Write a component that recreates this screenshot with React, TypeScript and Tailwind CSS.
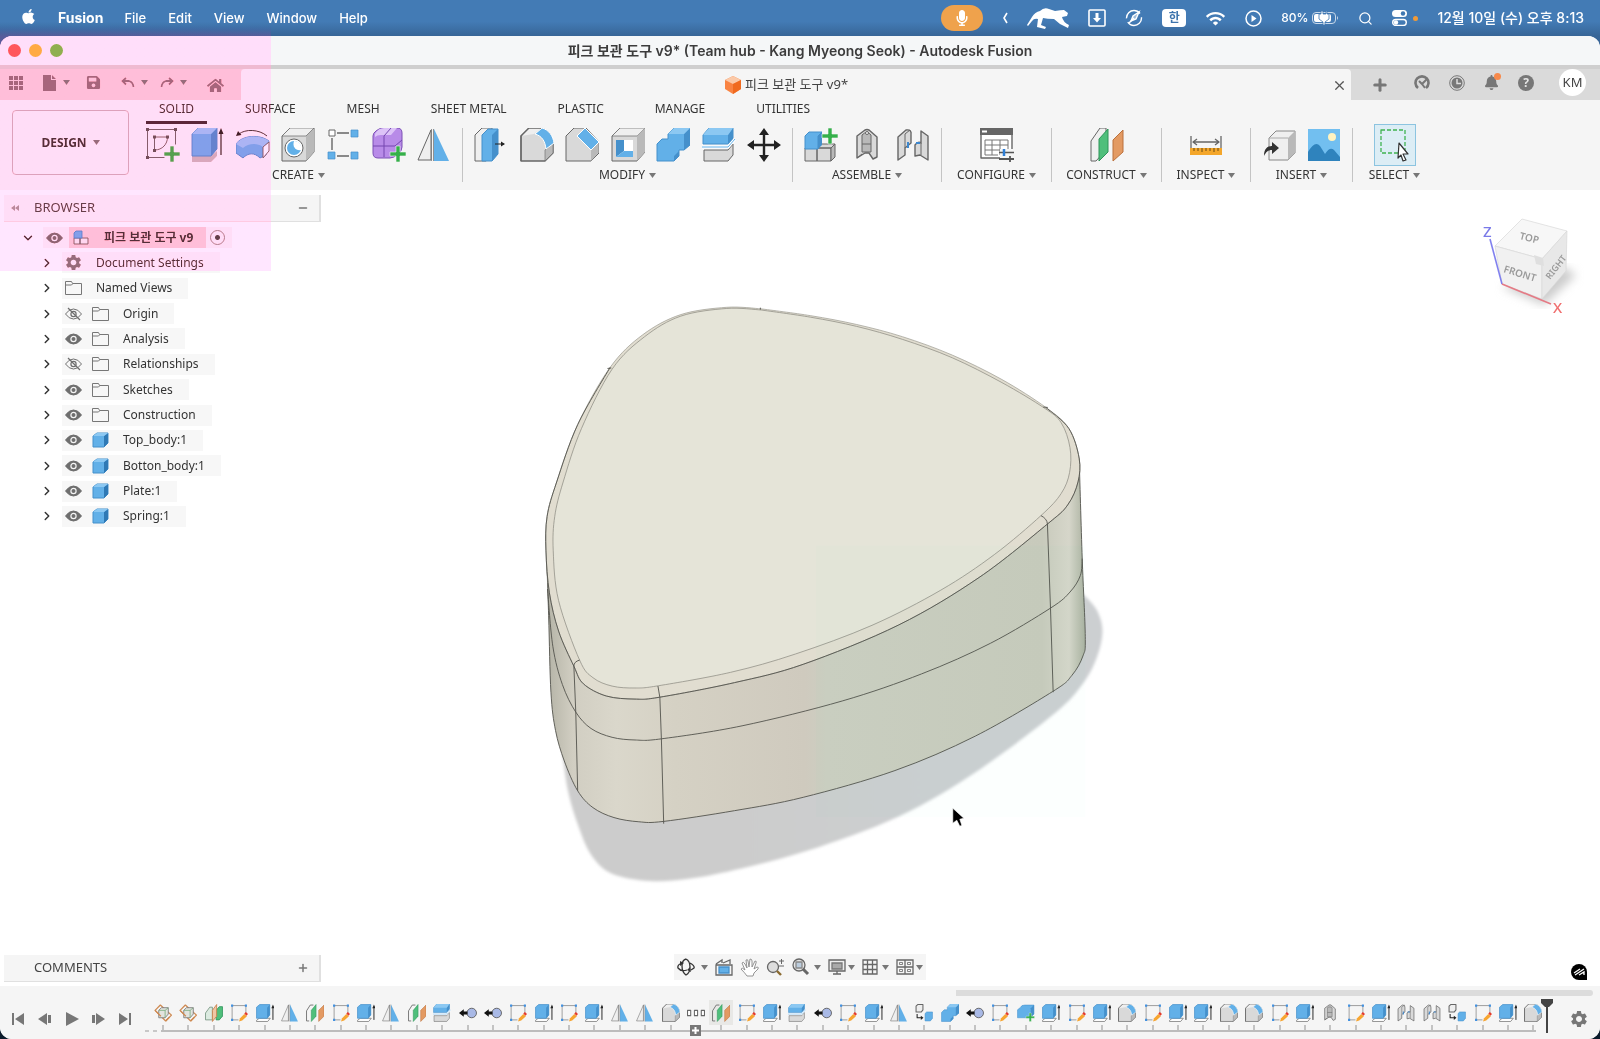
import type { ReactNode } from "react";
import clsx from "clsx";
import {
    ChevronDown,
    ChevronRight,
    Minus,
    Plus,
    Search,
    X,
} from "lucide-react";
import { FaApple, FaHome, FaMicrophone, FaSave, FaBell } from "react-icons/fa";
import { MdSettings, MdWifi } from "react-icons/md";

type Point = [number, number];

const BLUE = "#62b0e8";
const BLUE_DARK = "#4590cb";
const BLUE_LIGHT = "#8cc8f2";
const GREY = "#d9d9d9";
const GREY_LIGHT = "#efefef";
const GREY_DARK = "#b9b9b9";
const LINE = "#666666";

// Smooth line through a list of points
function curve(points: Point[]) {
    let d = `M${points[0][0]} ${points[0][1]}`;
    for (let i = 0; i < points.length - 1; i++) {
        const p0 = points[i - 1] ?? points[i];
        const p1 = points[i];
        const p2 = points[i + 1];
        const p3 = points[i + 2] ?? p2;
        const c1 = [p1[0] + (p2[0] - p0[0]) / 6, p1[1] + (p2[1] - p0[1]) / 6];
        const c2 = [p2[0] - (p3[0] - p1[0]) / 6, p2[1] - (p3[1] - p1[1]) / 6];
        d += `C${c1[0]} ${c1[1]} ${c2[0]} ${c2[1]} ${p2[0]} ${p2[1]}`;
    }
    return d;
}

function Icon({ children, size = 34 }: { children: ReactNode; size?: number }) {
    return (
        <svg width={size} height={size} viewBox="0 0 34 34" fill="none" strokeLinejoin="round" className="shrink-0">
            {children}
        </svg>
    );
}

const GreenPlus = ({ x = 26, y = 26 }: { x?: number; y?: number }) => (
    <path
        d={`M${x - 2} ${y - 8}h4v6h6v4h-6v6h-4v-6h-6v-4h6z`}
        fill="#35b04a"
        stroke="#f5f5f5"
        strokeWidth=".6"
    />
);

/* Tool icons, 34 x 34 grid */
const icons: Record<string, ReactNode> = {
    createSketch: (
        <>
            <path d="M1.5 1.5h28M1.5 1.5v28h17M29.500 1.500v15M8.500 9h13M8.500 9v13M21.500 9c0 7-5 13-13 13" stroke={LINE} />
            <path d="M0 0h3v3H0zM28 0h3v3h-3zM0 28h3v3H0zM7 7.500h3v3H7zM20 7.500h3v3h-3zM7 21h3v3H7z" fill="#555" />
            <GreenPlus />
        </>
    ),
    extrudeBig: (
        <>
            <path d="M1 28h19l6-5v5l-6 6H1z" fill={GREY_DARK} />
            <path d="M1 6l6-6h19v21l-6 7H1z" fill={BLUE} stroke={BLUE_DARK} />
            <path d="M20 6l6-6v21l-6 7z" fill={BLUE_DARK} />
            <path d="M1 6l6-6h19l-6 6z" fill={BLUE_LIGHT} />
            <path d="M30 27V4" stroke="#222" strokeWidth="1.200" />
            <path d="M30 0l2.500 6h-5z" fill="#222" />
        </>
    ),
    revolve: (
        <>
            <path d="M0 16C6 7 24 6 33 13l-3 14-6 3C18 24 12 25 7 30L0 25z" fill={BLUE} stroke={BLUE_DARK} />
            <path d="M0 16C6 7 24 6 33 13l-6 6C20 14 12 16 7 20z" fill={BLUE_LIGHT} />
            <path d="M27 19l6-5v9l-6 7z" fill="#fff" stroke={LINE} />
            <path d="M3 6C9 1 23 1 31 8" stroke="#333" />
            <path d="M0 8l2-5 3.500 4z" fill="#222" />
        </>
    ),
    hole: (
        <>
            <path d="M1 8l8-8h24v24l-8 9H1z" fill={GREY} stroke={LINE} />
            <path d="M25 8l8-8v24l-8 9z" fill={GREY_DARK} />
            <path d="M1 8l8-8h24l-8 8z" fill={GREY_LIGHT} stroke={LINE} strokeWidth=".7" />
            <circle cx="13" cy="20" r="9" fill="#fff" stroke={LINE} />
            <circle cx="13" cy="20" r="7" fill={BLUE} />
            <path d="M13 13a7 7 0 0 1 7 9c-5 1-9-3-7-9z" fill="#fff" />
        </>
    ),
    pattern: (
        <>
            <path d="M10 5h12M5 10v12M10 28h12" stroke={LINE} strokeWidth="1.400" />
            <rect x="2" y="2" width="6" height="6" fill="#fff" stroke={LINE} />
            <path d="M24 2h7v7h-7zM1 24h7v7H1zM24 24h7v7h-7z" fill={BLUE} stroke={BLUE_DARK} strokeWidth=".7" />
        </>
    ),
    form: (
        <>
            <path d="M1 8q0-3 3-5 3-3 8-3h13q5 0 5 5v14q0 4-4 7-4 4-8 4H6q-5 0-5-5z" fill="#b88be8" stroke="#7c50b5" />
            <path d="M3 6q3-6 9-6h13l-6 7H9q-4 0-6 2z" fill="#dcc3f7" />
            <path d="M1 18h22l7-6M12 29V8l7-8" stroke="#7447b0" />
            <GreenPlus />
        </>
    ),
    mirror: (
        <>
            <path d="M14 2v30H1z" fill={GREY_LIGHT} stroke={LINE} />
            <path d="M17 1l15 32H17z" fill={BLUE} />
            <path d="M14.500 1v32M16.500 1v32" stroke="#777" strokeWidth=".8" />
        </>
    ),
    pressPull: (
        <>
            <path d="M1 7l7-7h10v28l-6 5H1z" fill={GREY_LIGHT} stroke={LINE} />
            <path d="M8 7l6-6h10v25l-6 7H8z" fill={BLUE} stroke={BLUE_DARK} />
            <path d="M18 7l6-6v25l-6 7z" fill={BLUE_DARK} />
            <path d="M21 16h9" stroke="#222" />
            <path d="M31 16l-4-2.500v5z" fill="#222" />
        </>
    ),
    fillet: (
        <>
            <path d="M1 33V8l8-8h12c7 2 12 9 12 15v10l-8 8z" fill={GREY} stroke={LINE} strokeWidth="1.300" />
            <path d="M25 22l8-7v10l-8 8z" fill={GREY_DARK} stroke={LINE} strokeWidth=".6" />
            <path d="M1 8l8-8h12l-7 6z" fill={GREY_LIGHT} />
            <path d="M15 6l7-6c7 2 11 8 12 15l-8 6c-1-8-4-13-11-15z" fill={BLUE} stroke="#fff" />
            <path d="M1 33V8l8-8h12" stroke={LINE} strokeWidth="1.300" />
        </>
    ),
    chamfer: (
        <>
            <path d="M1 33V8l8-8h12l13 14v11l-8 8z" fill={GREY} stroke={LINE} />
            <path d="M26 22l7-7v10l-7 8z" fill={GREY_DARK} />
            <path d="M12 8l8-8 14 14-8 8z" fill={BLUE} stroke="#fff" />
        </>
    ),
    shell: (
        <>
            <path d="M1 8l8-8h25v24l-8 9H1z" fill={GREY} stroke={LINE} />
            <path d="M1 8l8-8h25l-8 8z" fill={GREY_LIGHT} stroke={LINE} strokeWidth=".7" />
            <path d="M26 8l8-8v24l-8 9z" fill={GREY_DARK} />
            <path d="M5 12h17v17H5z" fill="#fff" />
            <path d="M5 12h8v11l-8 6z" fill={BLUE_DARK} />
            <path d="M5 29l8-6h9v6z" fill={BLUE} />
        </>
    ),
    combine: (
        <>
            <path d="M12 6l6-6h16v17l-6 5h-5v6l-5 5H1V16l5-5h6z" fill={BLUE} stroke={BLUE_DARK} />
            <path d="M28 6l6-6v17l-6 5zM18 28l5-5v5l-5 5z" fill={BLUE_DARK} />
            <path d="M12 6l6-6h16l-6 6z" fill={BLUE_LIGHT} />
        </>
    ),
    split: (
        <>
            <path d="M1 7l6-7h24v11l-5 5H1z" fill={BLUE} stroke={BLUE_DARK} />
            <path d="M26 7l5-7v11l-5 5z" fill={BLUE_DARK} />
            <path d="M1 7l6-7h24l-5 7z" fill={BLUE_LIGHT} />
            <path d="M2 22h24l5-6v11l-5 6H2z" fill={GREY} stroke={LINE} />
            <path d="M0 19h26l7-8" stroke="#fff" strokeWidth="3" />
            <path d="M0 19h26l7-8" stroke={BLUE} />
        </>
    ),
    moveCopy: (
        <>
            <path d="M17 5v24M5 17h24" stroke="#222" strokeWidth="2.400" />
            <path d="M17 0l5 7H12zM17 34l5-7H12zM0 17l7-5v10zM34 17l-7-5v10z" fill="#222" />
        </>
    ),
    newComponent: (
        <>
            <path d="M1 20h12v13H1zM13 20l4-4h14l-4 4zM13 20h14v13H13z" fill={GREY} stroke={LINE} />
            <path d="M27 20l4-4v13l-4 4z" fill={GREY_DARK} stroke={LINE} />
            <path d="M1 8l4-4h13l-4 4v13H1z" fill={BLUE} stroke={BLUE_DARK} />
            <path d="M14 8l4-4v13l-4 4z" fill={BLUE_DARK} />
            <GreenPlus x={26} y={8} />
        </>
    ),
    joint: (
        <>
            <path d="M7 8l8-6q2-1 4 0l8 7v20l-4 2-4-6h-4l-8 5z" fill={GREY} stroke={LINE} strokeWidth="1.400" />
            <path d="M12 7q5-5 9 0v17h-9z" fill={GREY_DARK} stroke={LINE} />
            <path d="M12 16h9M7 30l5-4" stroke={LINE} />
            <circle cx="17" cy="5" r="1.500" fill="#fff" stroke={LINE} />
        </>
    ),
    jointAsBuilt: (
        <>
            <path d="M2 9l8-7q6-1 5 5v8l-6 5v7l-7 5z" fill={GREY} stroke={LINE} strokeWidth="1.400" />
            <path d="M9 20V6M9 6l5-4" stroke={LINE} />
            <path d="M25 3l7 5v24l-8-5-5 1V17q3-4 6-2z" fill={GREY} stroke={LINE} strokeWidth="1.400" />
            <path d="M25 15v12" stroke={LINE} />
            <path d="M12 14v6M20 15h4" stroke="#3c87cf" strokeWidth="2" />
        </>
    ),
    configure: (
        <>
            <path d="M1 1h31v29H1z" fill="#fff" stroke={LINE} strokeWidth="1.400" />
            <path d="M0 0h33v7H0z" fill="#666" />
            <path d="M5 12h23M5 17h23M5 22h17M5 27h13M5 12v15M12 12v15M20 12v15M28 12v9" stroke="#777" />
            <path d="M2 2.500h5v2H2z" fill="#fff" />
            <path d="M20 21h15v13H20z" fill="#f5f5f5" />
            <path d="M19 24.500h15" stroke="#555" strokeWidth="1.600" />
            <path d="M24 21v7" stroke="#2f7fd6" strokeWidth="2.500" />
            <path d="M19 31h15M30 28v6" stroke="#555" strokeWidth="1.800" />
        </>
    ),
    construct: (
        <>
            <path d="M1 13L10 0h6v22L6 33H1z" fill={GREY_LIGHT} stroke={LINE} />
            <path d="M9 11l9-10v23L9 33z" fill="#4fbf7b" stroke="#2e9459" />
            <path d="M23 12L33 2v22l-10 9z" fill="#e39a63" stroke="#bb713c" />
        </>
    ),
    inspect: (
        <>
            <path d="M2 8v12M32 8v12M4 14h26M8 11l-4 3 4 3M26 11l4 3-4 3" stroke={LINE} strokeWidth="1.300" />
            <path d="M1 20h32v7H1z" fill="#f4a62a" />
            <path d="M5 20v3M9 20v3M13 20v4M17 20v3M21 20v3M25 20v4M29 20v3" stroke="#6b4a12" />
        </>
    ),
    insertPart: (
        <>
            <path d="M7 10l7-7h19v22l-7 7H7z" fill={GREY_LIGHT} stroke="#888" />
            <path d="M26 10l7-7v22l-7 7z" fill={GREY_DARK} />
            <path d="M7 10h19" stroke="#aaa" />
            <path d="M2 28c0-7 3-10 8-10v-4l7 6-7 6v-4c-4 0-6 2-8 6z" fill="#333" />
        </>
    ),
    insertImage: (
        <>
            <path d="M1 1h32v32H1z" fill="#72bff0" />
            <circle cx="25" cy="9" r="4" fill="#fff3c0" />
            <path d="M1 24q7-12 12-6l5 8q5-8 9-4l6 7v4H1z" fill="#2f83bd" />
        </>
    ),
    select: (
        <>
            <path d="M3 2h24v23H3z" stroke="#3fb24f" strokeWidth="1.300" strokeDasharray="4 2" />
            <path d="M21 15l9 11h-5l3 6-3 1-2-6-3 3z" fill="#fff" stroke="#333" strokeWidth="1.200" />
        </>
    ),
    /* timeline features */
    sketch: (
        <>
            <path d="M4 3h26v14M4 3v27h12" stroke="#888" strokeWidth="1.500" />
            <path d="M2 1h4v4H2zM28 1h4v4h-4zM2 28h4v4H2z" fill="#3f8fe0" />
            <path d="M17 33l2-6 8-8 5 4-9 8z" fill="#f7a531" />
            <path d="M27 18l3-3 4 4-3 3z" fill="#e53b2c" />
        </>
    ),
    extrude: (
        <>
            <path d="M1 31l5-4h21l-5 6H1z" fill="#fff" stroke={LINE} strokeWidth="1.300" />
            <path d="M1 6l6-5h19v20l-5 6H1z" fill={BLUE} stroke={BLUE_DARK} strokeWidth="1.300" />
            <path d="M21 7l5-6v20l-5 6z" fill={BLUE_DARK} />
            <path d="M32 30V6" stroke="#222" strokeWidth="1.800" />
            <path d="M32 1l3 7h-6z" fill="#222" />
        </>
    ),
    remove: (
        <>
            <circle cx="24" cy="17" r="9" fill="#a9b9e6" stroke="#555" strokeWidth="1.600" />
            <path d="M0 17l9-7v4h7v6H9v4z" fill="#111" />
        </>
    ),
    plane: (
        <>
            <path d="M1 13L8 2h6M1 13v19h5" stroke={LINE} strokeWidth="1.600" />
            <path d="M10 12l9-11v22L10 33z" fill="#4fbf7b" stroke="#2e9459" />
            <path d="M24 12l10-10v21l-10 10z" fill="#e39a63" stroke="#bb713c" />
        </>
    ),
    midPlane: (
        <>
            <path d="M1 30V17L9 6h5v24z" fill="#dcebe1" stroke="#6f8f7a" strokeWidth="1.500" />
            <path d="M21 12l6-7h6v18l-6 7h-6z" fill="#4fbf7b" stroke="#2e9459" strokeWidth="1.500" />
            <path d="M14 12l8-11v22l-8 10z" fill="#f0c6a4" stroke="#c87a43" strokeWidth="1.500" />
        </>
    ),
    jointOrigin: (
        <>
            <path d="M12 2L2 12l20 20 11-11z" stroke="#cf8a52" strokeWidth="2.400" />
            <path d="M9 12l5-5h13v12l-6 7H9z" fill="#e2e4df" stroke="#777" strokeWidth="1.600" />
            <path d="M9 12h12l6-5M21 12v14" stroke="#6fa873" strokeWidth="1.400" />
            <path d="M2 12l11 11M22 32l7-7" stroke="#cf8a52" strokeWidth="2.400" />
        </>
    ),
    group: (
        <path d="M1 12h6v10H1zM14 12h6v10h-6zM27 12h6v10h-6z" stroke="#666" strokeWidth="2" fill="#fff" />
    ),
    copyBody: (
        <>
            <path d="M2 4l3-3h10v10l-3 4H2z" fill="#eee" stroke={LINE} strokeWidth="2" />
            <path d="M19 18l3-3h11v12l-4 5H19z" fill={BLUE} stroke={BLUE_DARK} />
            <path d="M4 19v7h8" stroke="#222" strokeWidth="2" />
            <path d="M11 22l5 4-5 4z" fill="#222" />
        </>
    ),
    newBody: (
        <>
            <path d="M1 11l6-5q1-4 8-4h17v17l-7 7H1z" fill={BLUE} stroke={BLUE_DARK} />
            <path d="M26 8l6-6v17l-6 7z" fill={BLUE_DARK} />
            <GreenPlus x={25} y={25} />
        </>
    ),
};

const Caret = () => (
    <svg width="7" height="5" viewBox="0 0 7 5" className="shrink-0">
        <path d="M0 0h7L3.500 5z" fill="#777" />
    </svg>
);

/* ---------- macOS menu bar ---------- */

function MenuBar() {
    return (
        <header className="flex h-9 shrink-0 items-center justify-between bg-gradient-to-b from-[#437bb5] from-60% to-[#376597] pr-4 pl-5 font-[Inter,'Noto_Sans_CJK_KR',sans-serif] text-[13px] leading-5 text-white">
            <nav className="flex items-center gap-[22px] font-medium">
                <FaApple size={17} className="-mr-px mb-1" />
                <button className="-mr-px text-[14px] leading-5 font-bold">Fusion</button>
                {["File", "Edit", "View", "Window", "Help"].map((m) => (
                    <button key={m}>{m}</button>
                ))}
            </nav>
            <div className="flex items-center gap-[19px]">
                <button aria-label="Microphone" className="flex h-[26px] w-[42px] items-center justify-center rounded-full bg-[#efa24c]">
                    <FaMicrophone size={16} />
                </button>
                <svg width="6" height="12" viewBox="0 0 6 12" fill="none" stroke="#fff" strokeWidth="1.600"><path d="M5 1L2 6l3 5" /></svg>
                <svg width="42" height="22" viewBox="0 0 42 22" fill="#fff">
                    <path d="M0 18l5-8q3-5 8-6 4-4 9-2l6 2q6-1 9-1l4 3-1 3-5 1q1 5 7 8l-1 3-8-4-6-5q-7 0-11-1l-2 7 5 2-1 2-8-2 1-8q-4-1-6 2l-4 5z" />
                </svg>
                <svg width="18" height="18" viewBox="0 0 18 18" fill="none" stroke="#fff" strokeWidth="1.600"><rect x="1" y="1" width="16" height="16" rx="1" /><path d="M9 4v7" strokeWidth="3" /><path d="M5 9h8l-4 4.500z" fill="#fff" stroke="none" /></svg>
                <svg width="18" height="18" viewBox="0 0 18 18" fill="none" stroke="#fff" strokeWidth="1.400"><circle cx="9" cy="9" r="7.500" strokeDasharray="19 4" /><path d="M14 3L8 7l-2 5 5-2z" fill="#fff" fillOpacity=".5" /><path d="M4 14l5-5" /></svg>
                <span className="flex h-[18px] w-6 items-center justify-center rounded bg-white text-[12px] font-bold text-[#3d74ad]">한</span>
                <MdWifi size={21} />
                <svg width="17" height="17" viewBox="0 0 17 17" fill="none" stroke="#fff" strokeWidth="1.500"><circle cx="8.500" cy="8.500" r="7.500" /><path d="M6.500 5v7l5-3.500z" fill="#fff" stroke="none" /></svg>
                <span className="flex items-center gap-1 text-[12px] font-medium">
                    80%
                    <svg width="27" height="14" viewBox="0 0 27 14"><rect x=".5" y="1.500" width="23" height="11" rx="3.500" fill="none" stroke="#c9d9ea" /><rect x="2" y="3" width="17" height="8" rx="2" fill="#fff" /><path d="M25 5q2 2 0 4z" fill="#c9d9ea" /><path d="M9 0v3H7v5l4 3v3h2v-3l4-3V3h-2V0h-1v3h-3V0z" fill="#fff" stroke="#3f77b1" strokeWidth=".8" /></svg>
                </span>
                <Search size={15} />
                <span className="flex items-center gap-1.5">
                    <svg width="15" height="16" viewBox="0 0 15 16"><rect width="15" height="7" rx="3.500" fill="#fff" /><circle cx="11" cy="3.500" r="2.200" fill="#3f77b1" /><rect x=".7" y="9.500" width="13.600" height="6" rx="3" fill="none" stroke="#fff" strokeWidth="1.400" /><circle cx="4" cy="12.500" r="2.200" fill="#fff" /></svg>
                    <i className="size-[5px] rounded-full bg-[#f19a37]" />
                </span>
                <time className="text-[14px] leading-5 font-medium">12월 10일 (수) 오후 8:13</time>
            </div>
        </header>
    );
}

/* ---------- Document tabs ---------- */

function TabStrip() {
    return (
        <div className="flex h-[35px] shrink-0 border-t-4 border-[#cfcfcf] bg-[#dadada]">
            <div className="flex w-[241px] shrink-0 items-center bg-[#ffd3d7] pb-1 pl-[9px] text-[#877078]">
                <button aria-label="Data panel" className="mr-5">
                    <svg width="14" height="14" viewBox="0 0 14 14" fill="currentColor"><path d="M0 0h4v4H0zM5 0h4v4H5zM10 0h4v4h-4zM0 5h4v4H0zM5 5h4v4H5zM10 5h4v4h-4zM0 10h4v4H0zM5 10h4v4H5zM10 10h4v4h-4z" /></svg>
                </button>
                <button aria-label="File" className="mr-4 flex items-center gap-1.5">
                    <svg width="14" height="16" viewBox="0 0 14 16" fill="currentColor"><path d="M0 0h8v5h5v11H0zM9 0l4 4H9z" /></svg>
                    <Caret />
                </button>
                <button aria-label="Save" className="mr-5"><FaSave size={15} /></button>
                <button aria-label="Undo" className="mr-3 flex items-center gap-1.5">
                    <svg width="14" height="12" viewBox="0 0 14 12" fill="none" stroke="currentColor" strokeWidth="1.800"><path d="M5 1L1.500 4 5 7.500M2 4h6q4 1 4.500 6" /></svg>
                    <Caret />
                </button>
                <button aria-label="Redo" className="mr-5 flex items-center gap-1.5">
                    <svg width="14" height="12" viewBox="0 0 14 12" fill="none" stroke="currentColor" strokeWidth="1.800"><path d="M9 1l3.500 3L9 7.500M12 4H6Q2 5 1.500 10" /></svg>
                    <Caret />
                </button>
                <button aria-label="Home" className="pt-1.5"><FaHome size={17} /></button>
            </div>
            <div className="flex flex-1 items-center rounded-t bg-[#f5f5f5] pt-px pr-1">
                <div className="flex flex-1 items-center justify-center gap-1 text-[13px] text-[#444]">
                    <svg width="16" height="18" viewBox="0 0 16 18"><path d="M8 0l8 4v9l-8 5-8-5V4z" fill="#f98342" /><path d="M8 0l8 4-8 4-8-4z" fill="#fbc9a8" /><path d="M8 8l8-4v9l-8 5z" fill="#f06a1f" /></svg>
                    피크 보관 도구 v9*
                </div>
                <button aria-label="Close tab"><X size={15} color="#555" /></button>
            </div>
            <div className="flex w-[249px] shrink-0 items-center justify-between pr-[14px] pl-5 text-[#777]">
                <button aria-label="New design"><Plus size={18} strokeWidth={4} /></button>
                <span className="flex items-center gap-[19px] pb-1">
                    <svg width="16" height="16" viewBox="0 0 16 16" fill="none"><path d="M4 13A6.500 6.500 0 1 1 12 13" stroke="#777" strokeWidth="2.600" /><path d="M5 6l3 3 5-5M8 9l3 4" stroke="#777" strokeWidth="2" /></svg>
                    <svg width="16" height="16" viewBox="0 0 16 16" fill="none"><circle cx="8" cy="8" r="7.300" stroke="#777" /><circle cx="8" cy="8" r="5.500" fill="#777" /><path d="M8 4v4.500h4" stroke="#ddd" strokeWidth="1.500" /></svg>
                    <span className="relative"><FaBell size={15} /><i className="absolute -top-0.5 -right-0.5 size-[7px] rounded-full bg-[#f7894a]" /></span>
                    <span className="flex size-4 items-center justify-center rounded-full bg-[#777] text-[12px] font-bold text-[#e5e5e5]">?</span>
                </span>
                <button className="-mt-1 flex size-[27px] items-center justify-center rounded-full bg-white text-[13px] text-[#444]">KM</button>
            </div>
        </div>
    );
}

/* ---------- Ribbon ---------- */

const ribbonTabs = ["SOLID", "SURFACE", "MESH", "SHEET METAL", "PLASTIC", "MANAGE", "UTILITIES"];

const ribbonGroups = [
    { label: "CREATE", width: "w-[328px]", tools: ["createSketch", "extrudeBig", "revolve", "hole", "pattern", "form", "mirror"] },
    { label: "MODIFY", width: "w-[330px]", tools: ["pressPull", "fillet", "chamfer", "shell", "combine", "split", "moveCopy"] },
    { label: "ASSEMBLE", width: "w-[149px]", tools: ["newComponent", "joint", "jointAsBuilt"] },
    { label: "CONFIGURE", width: "w-[110px]", tools: ["configure"] },
    { label: "CONSTRUCT", width: "w-[110px]", tools: ["construct"] },
    { label: "INSPECT", width: "w-[89px]", tools: ["inspect"] },
    { label: "INSERT", width: "w-[102px]", tools: ["insertPart", "insertImage"] },
    { label: "SELECT", width: "w-[83px]", tools: ["select"] },
];

function Ribbon() {
    return (
        <div className="flex h-[90px] shrink-0 bg-[#f5f5f5] text-[12px] text-[#333]">
            <button className="mt-[10px] mr-1.5 ml-3 flex h-[65px] w-[117px] shrink-0 items-center justify-center gap-1.5 rounded border border-[#bdb3b8] font-bold">
                DESIGN <Caret />
            </button>
            <div className="flex flex-col">
                <div className="flex h-6 items-stretch gap-[25px] pl-[11px]">
                    {ribbonTabs.map((t, i) => (
                        <button key={t} className={clsx("border-b-3 px-[13px] pb-1 leading-4", i === 0 ? "border-[#3c2a33]" : "border-transparent")}>
                            {t}
                        </button>
                    ))}
                </div>
                <div className="flex pt-1">
                    {ribbonGroups.map((g) => (
                        <section key={g.label} className={clsx("flex h-[54px] flex-col items-center justify-between border-r border-[#c4c4c4] last:border-0", g.width)}>
                            <div className={clsx("flex w-full px-[11px]", g.tools.length > 1 ? "justify-between" : "justify-center")}>
                                {g.tools.map((t) => (
                                    <button
                                        key={t}
                                        aria-label={t}
                                        className={clsx(t === "select" && "-m-1 border border-[#8cc4e0] bg-[#dcedf5] p-[3px]")}
                                    >
                                        <Icon>{icons[t]}</Icon>
                                    </button>
                                ))}
                            </div>
                            <button className="flex items-center gap-1 leading-[14px]">
                                {g.label} <Caret />
                            </button>
                        </section>
                    ))}
                </div>
            </div>
        </div>
    );
}

/* ---------- Browser tree ---------- */

type Node = { label: string; icon: "settings" | "folder" | "body"; eye?: "on" | "off" };

const nodes: Node[] = [
    { label: "Document Settings", icon: "settings" },
    { label: "Named Views", icon: "folder" },
    { label: "Origin", icon: "folder", eye: "off" },
    { label: "Analysis", icon: "folder", eye: "on" },
    { label: "Relationships", icon: "folder", eye: "off" },
    { label: "Sketches", icon: "folder", eye: "on" },
    { label: "Construction", icon: "folder", eye: "on" },
    { label: "Top_body:1", icon: "body", eye: "on" },
    { label: "Botton_body:1", icon: "body", eye: "on" },
    { label: "Plate:1", icon: "body", eye: "on" },
    { label: "Spring:1", icon: "body", eye: "on" },
];

function Eye({ off = false }: { off?: boolean }) {
    return (
        <svg width="17" height="14" viewBox="0 0 17 14" fill="none" className="shrink-0">
            <path d="M.5 7Q4 2 8.500 2T16.500 7Q13 12 8.500 12T.5 7z" fill={off ? "none" : "#6e6e6e"} stroke="#6e6e6e" />
            <circle cx="8.500" cy="7" r="2.600" fill={off ? "none" : "#6e6e6e"} stroke={off ? "#6e6e6e" : "#f5f5f5"} strokeWidth="1.200" />
            {off && <path d="M3 1l12 12" stroke="#6e6e6e" strokeWidth="1.200" />}
        </svg>
    );
}

function NodeIcon({ icon }: { icon: Node["icon"] }) {
    if (icon === "settings") return <MdSettings size={19} color="#777" className="-mx-px shrink-0" />;
    if (icon === "body") {
        return (
            <svg width="17" height="16" viewBox="0 0 17 16" className="shrink-0">
                <path d="M1 4l4-3h11v10l-4 4H1z" fill={BLUE} stroke={BLUE_DARK} />
                <path d="M12 4l4-3v10l-4 4z" fill="#2f79b5" />
                <path d="M1 4l4-3h11l-4 3z" fill={BLUE_LIGHT} />
            </svg>
        );
    }
    return (
        <svg width="17" height="14" viewBox="0 0 17 14" fill="none" stroke="#777" className="shrink-0">
            <path d="M.5 13.500v-13h6l1 2h9v11zM.5 4h6l1.500-1.500" />
        </svg>
    );
}

const panelHeader = "flex h-[27px] w-[317px] items-center border-r-2 border-b border-[#e0e0e0] bg-[#f5f5f5] pr-2.5 text-[13px] text-[#444]";

function Browser() {
    return (
        <aside className="relative pt-[5px] pl-1 text-[12px] text-[#333]">
            <div className={panelHeader}>
                <svg width="8" height="6" viewBox="0 0 8 6" fill="#999" className="mr-[15px] ml-[7px]"><path d="M4 0v6L0 3zM8 0v6L4 3z" /></svg>
                <h2 className="flex-1">BROWSER</h2>
                <button aria-label="Collapse"><Minus size={12} strokeWidth={3} color="#777" /></button>
            </div>
            <ul className="flex h-[305px] flex-col justify-between pt-[5px]">
                <li className="flex h-[21px] items-center pl-[17px]">
                    <button aria-label="Collapse component" className="mr-2"><ChevronDown size={14} strokeWidth={2.5} /></button>
                    <span className="flex h-full items-center bg-[#f5f5f5] pr-[7px] pl-[3px]">
                        <Eye />
                        <span className="mr-1 ml-1.5 flex h-full w-[137px] items-center gap-[15px] bg-[#ffd3d7] pl-1 font-bold">
                            <svg width="16" height="15" viewBox="0 0 16 15"><path d="M1 8h6v6H1zM7 8h8v6H7z" fill="#eee" stroke="#666" /><path d="M1 3l2-2h6v7H1z" fill={BLUE} stroke={BLUE_DARK} /></svg>
                            피크 보관 도구 v9
                        </span>
                        <input type="radio" name="active-component" aria-label="Activate component" defaultChecked className="size-[15px] appearance-none rounded-full border border-[#888] bg-[radial-gradient(circle,#444_2px,transparent_3px)]" />
                    </span>
                </li>
                {nodes.map((n) => (
                    <li key={n.label} className="flex h-[21px] items-center pl-9">
                        <button aria-label={`Expand ${n.label}`} className="mr-2"><ChevronRight size={14} strokeWidth={2.5} /></button>
                        <span className="flex h-full items-center bg-[#f7f7f7] pr-4 pl-[3px]">
                            {n.eye && <span className="mr-2.5"><Eye off={n.eye === "off"} /></span>}
                            <NodeIcon icon={n.icon} />
                            <span className="ml-3.5">{n.label}</span>
                        </span>
                    </li>
                ))}
            </ul>
        </aside>
    );
}

/* ---------- Viewport ---------- */

const rimOuter: Point[] = [
    [630, 47], [540, 43], [420, 62], [320, 115], [235, 200], [150, 350], [95, 500], [70, 590], [67, 680],
    [76, 790], [100, 890], [140, 982], [165, 1028], [225, 1060], [300, 1068], [365, 1063], [560, 1025], [740, 977],
    [990, 874], [1200, 750], [1379, 610], [1432, 560], [1459, 500], [1462, 438], [1435, 360], [1375, 305],
    [1260, 232], [1130, 168], [1000, 120], [880, 88], [760, 65], [630, 47],
];

const topFace: Point[] = [
    [630, 50], [540, 46], [420, 66], [325, 120], [240, 205], [160, 360], [112, 500], [90, 590], [86, 680],
    [100, 810], [155, 966], [190, 1012], [240, 1034], [300, 1039], [362, 1033], [550, 998], [720, 950],
    [920, 875], [1100, 783], [1240, 690], [1362, 588], [1415, 530], [1437, 475], [1438, 410], [1415, 345],
    [1370, 306], [1260, 240], [1130, 175], [1000, 127], [880, 93], [760, 69], [630, 50],
];

const silhouette: Point[] = [
    [67, 640], [74, 850], [80, 1050], [92, 1150], [115, 1230], [150, 1308], [190, 1352], [245, 1378], [310, 1389],
    [375, 1388], [560, 1360], [740, 1325], [980, 1255], [1190, 1165], [1393, 1048], [1443, 1006], [1472, 955],
    [1478, 905], [1470, 700], [1462, 438],
];

const seam: Point[] = [
    [71, 780], [85, 930], [110, 1030], [145, 1102], [185, 1145], [240, 1168], [300, 1175], [369, 1172],
    [580, 1138], [842, 1073], [1050, 1002], [1230, 922], [1387, 830], [1438, 788], [1465, 745], [1470, 700],
];

const shadow: Point[] = [
    [1474, 795], [1508, 835], [1523, 890], [1508, 960], [1470, 1030], [1395, 1108], [1190, 1260], [990, 1375],
    [750, 1465], [560, 1515], [440, 1538], [340, 1544], [240, 1525], [185, 1475], [150, 1395], [125, 1310], [110, 1210],
];

function Model() {
    return (
        <svg viewBox="0 189 1600 797" className="absolute inset-0 h-full w-full" fill="none">
            <defs>
                <linearGradient id="wall" gradientUnits="userSpaceOnUse" x1="67" y1="0" x2="1478" y2="0">
                    <stop offset="0" stopColor="#b3b2a5" />
                    <stop offset=".05" stopColor="#d1cec2" />
                    <stop offset=".13" stopColor="#dad7cb" />
                    <stop offset=".24" stopColor="#d5d1c4" />
                    <stop offset=".48" stopColor="#cfcabe" />
                    <stop offset=".52" stopColor="#cccec1" />
                    <stop offset=".92" stopColor="#c8cabc" />
                    <stop offset=".97" stopColor="#d6d6ca" />
                    <stop offset="1" stopColor="#aab1a0" />
                </linearGradient>
                <linearGradient id="ground" gradientUnits="userSpaceOnUse" x1="200" y1="0" x2="1500" y2="0">
                    <stop offset=".3" stopColor="#cccccc" />
                    <stop offset=".7" stopColor="#cccfd1" />
                </linearGradient>
                <filter id="soft"><feGaussianBlur stdDeviation="4" /></filter>
            </defs>
            <g transform="translate(520 290) scale(.3827)" stroke="#55554f" strokeWidth="2.400">
                <path d={curve(shadow)} fill="url(#ground)" stroke="none" filter="url(#soft)" />
                <path d={curve(silhouette)} fill="url(#wall)" />
                <path d={curve(rimOuter)} fill="#e1ddd0" stroke="#a3a299" strokeWidth="2" />
                <path d={curve(rimOuter.slice(4, 26))} />
                <path d={curve(topFace)} fill="#e5e4d8" stroke="#8f8e85" strokeWidth="2" />
                <path d={curve(seam)} />
                <path d="M1362 588q16 8 17 22l8 220 7 220M360 1034l5 30 4 108 6 222M155 966q-15 4-15 16l5 120 5 206M228 203l10-1M628 44v5M1368 304l12 1" />
            </g>
            <path d="M816 545h270v272H816z" fill="#00ffcc" fillOpacity=".012" />
            <path d="M953 808v15l4-3 3 6 2-1-2-6 4-1z" fill="#000" stroke="#fff" strokeWidth=".6" />
        </svg>
    );
}

function ViewCube() {
    return (
        <svg width="140" height="130" viewBox="0 0 140 130" className="absolute top-[11px] right-0 font-['Noto_Sans',sans-serif]">
            <defs><filter id="cubeShadow"><feGaussianBlur stdDeviation="5" /></filter></defs>
            <path d="M42 86l42 18 32-30-12-8z" fill="#ccc" filter="url(#cubeShadow)" />
            <g stroke="#d9d9d9" strokeWidth=".7">
                <path d="M62 18l45 12-25 28-47-13z" fill="#f7f7f7" />
                <path d="M35 45l47 13v40l-40-15z" fill="#f1f1f1" />
                <path d="M82 58l25-28-1 40-24 28z" fill="#e8e8e8" />
            </g>
            <path d="M74 54l9 3 1 8-8-2z" fill="#dfdfdf" />
            <g fill="#9a9a9a" fontSize="10" fontWeight="600">
                <text x="59" y="38" transform="rotate(14 59 38)">TOP</text>
                <text x="43" y="71" transform="rotate(17 43 71)">FRONT</text>
                <text x="90" y="79" transform="rotate(-52 90 79)" fontSize="9">RIGHT</text>
            </g>
            <path d="M30 38l12 45" stroke="#8080ee" strokeWidth="1.600" />
            <path d="M42 83l49 20" stroke="#e57a85" strokeWidth="1.600" />
            <text x="23" y="36" fill="#7a7ae8" fontSize="15" fontWeight="500">Z</text>
            <text x="93" y="112" fill="#f07070" fontSize="15" fontWeight="500">X</text>
        </svg>
    );
}

function NavBar() {
    const stroke = { fill: "none", stroke: "#666", strokeWidth: 1.3 };
    return (
        <div className="absolute bottom-[6px] left-1/2 flex h-[26px] w-[252px] -translate-x-1/2 items-center justify-between bg-[#f5f5f5] px-[3px]">
            <button aria-label="Orbit" className="flex items-center gap-1.5">
                <svg width="18" height="18" viewBox="0 0 18 18" {...stroke} stroke="#333"><path d="M5 5Q0 7 1 10q3 4 9 2M13 5q5 3 4 5l-3 2M9 1q4 2 4 8T9 17Q5 14 5 8T9 1" /><path d="M13 9l-3 3 4 2zM3 3l4 2-4 3z" fill="#333" stroke="none" /></svg>
                <Caret />
            </button>
            <button aria-label="Look at">
                <svg width="18" height="18" viewBox="0 0 18 18" {...stroke}><path d="M1 7h16v10H1zM1 6l6-4v3M8 5l7-3v4" /><path d="M4 9h10v6H4z" fill={BLUE} stroke={BLUE_DARK} /></svg>
            </button>
            <button aria-label="Pan">
                <svg width="19" height="19" viewBox="0 0 19 19" fill="#fff" stroke="#888" strokeWidth=".9"><path d="M7 18q-2-3-6-7 1-2 4 1L2 5q1-2 3 1l2 4-1-8q2-1 2 1l1 6 1-8q2 0 2 2v6l3-6q2 0 1 2l-2 6 3-2q2 0 1 2l-4 4-1 3z" /></svg>
            </button>
            <button aria-label="Zoom">
                <svg width="19" height="18" viewBox="0 0 19 18" {...stroke}><circle cx="7" cy="9" r="5.500" fill="#ddd" /><path d="M11 13l4 4" stroke="#8a6a30" strokeWidth="2.400" /><path d="M13 3h5M15.500 1v5M13 8h5" strokeWidth="1" /></svg>
            </button>
            <button aria-label="Fit" className="flex items-center gap-1">
                <svg width="18" height="18" viewBox="0 0 18 18" {...stroke}><circle cx="7" cy="7" r="6" fill="#e5e5e5" /><path d="M4 4h6v6H4z" fill="#bcd" stroke="#888" /><path d="M11 11l5 5" strokeWidth="3" /></svg>
                <Caret />
            </button>
            <button aria-label="Display settings" className="flex items-center gap-0.5">
                <svg width="18" height="16" viewBox="0 0 18 16" {...stroke}><path d="M1 1h16v11H1z" fill="#eee" /><path d="M4 4h10v6H4z" fill="#aaa" stroke="#777" /><path d="M5 15h8M9 12v3" /></svg>
                <Caret />
            </button>
            <button aria-label="Grid settings" className="flex items-center gap-1">
                <svg width="16" height="16" viewBox="0 0 16 16" {...stroke}><path d="M1 1h14v14H1zM1 5.500h14M1 10.500h14M5.500 1v14M10.500 1v14" /></svg>
                <Caret />
            </button>
            <button aria-label="Viewports" className="flex items-center gap-0.5">
                <svg width="18" height="16" viewBox="0 0 18 16" {...stroke}><path d="M1 1h16v14H1zM1 8h16M9 1v14" /><path d="M3.500 3.500h3v2h-3zM11.500 3.500h3v2h-3zM3.500 10.500h3v2h-3zM11.500 10.500h3v2h-3z" strokeWidth=".8" /></svg>
                <Caret />
            </button>
        </div>
    );
}

/* ---------- Timeline ---------- */

const timeline = [
    "jointOrigin", "jointOrigin", "midPlane", "sketch", "extrude", "mirror", "plane", "sketch", "extrude", "mirror",
    "plane", "split", "remove", "remove", "sketch", "extrude", "sketch", "extrude", "mirror", "mirror", "fillet",
    "group", "plane", "sketch", "extrude", "split", "remove", "sketch", "extrude", "mirror", "copyBody", "combine",
    "remove", "sketch", "newBody", "extrude", "sketch", "extrude", "fillet", "sketch", "extrude", "extrude",
    "fillet", "fillet", "sketch", "extrude", "joint", "sketch", "extrude", "jointAsBuilt", "jointAsBuilt",
    "copyBody", "sketch", "extrude", "fillet",
];

const transport = [
    { label: "Go to start", d: "M1 1h2v12H1zM13 1v12L4 7z" },
    { label: "Step back", d: "M9 1v12L0 7zM10 3h3v8h-3z" },
    { label: "Play", d: "M1 0l13 7-13 7z" },
    { label: "Step forward", d: "M5 1v12l9-6zM1 3h3v8H1z" },
    { label: "Go to end", d: "M1 1v12l9-6zM11 1h2v12h-2z" },
];

function Timeline() {
    return (
        <footer className="flex h-[53px] shrink-0 bg-[#f5f5f5]">
            <div className="flex w-[145px] shrink-0 items-center justify-between pt-3 pr-[13px] pl-[11px]">
                {transport.map((t) => (
                    <button key={t.label} aria-label={t.label}>
                        <svg width="14" height="14" viewBox="0 0 14 14" fill="#777"><path d={t.d} /></svg>
                    </button>
                ))}
            </div>
            <div className="relative mr-[7px] flex-1">
                <div className="mt-1 ml-auto h-[6px] w-[44%] rounded-r-full bg-[#dcdcdc]" />
                <ol className="mt-1 flex justify-between pr-[47px] pl-[6px]">
                    {timeline.map((t, i) => (
                        <li key={i} className="relative flex w-6 flex-col items-center">
                            <button aria-label={t} className={clsx("flex h-[25px] w-6 items-center justify-center", i === 22 && "bg-[#e8e8e6]")}>
                                <Icon size={18}>{icons[t]}</Icon>
                            </button>
                            {t === "group" ? (
                                <svg width="11" height="11" viewBox="0 0 11 11" className="absolute top-[25px] z-10"><path d="M0 0h11v11H0z" fill="#777" /><path d="M5.500 2v7M2 5.500h7" stroke="#fff" strokeWidth="2" /></svg>
                            ) : (
                                <i className="h-[5px] w-0.5 bg-[#c3c3c3]" />
                            )}
                        </li>
                    ))}
                </ol>
                <div className="mr-[57px] flex h-0.5">
                    <i className="mr-1 w-1 bg-[#c8c8c8]" />
                    <i className="mr-1 w-1 bg-[#c8c8c8]" />
                    <i className="flex-1 bg-[#bdbdbd]" />
                </div>
                <svg width="12" height="34" viewBox="0 0 12 34" fill="#444" className="absolute top-[13px] right-10"><path d="M0 0h12v4l-4 4H7v26H5V8H4L0 4z" /></svg>
                <button aria-label="Timeline settings" className="absolute top-[23px] right-1"><MdSettings size={20} color="#777" /></button>
            </div>
        </footer>
    );
}

export default function App() {
    return (
        <div className="relative flex h-screen flex-col overflow-hidden bg-gradient-to-b from-[#376597] from-5% to-[#0b1b2b] to-50% font-['Noto_Sans','Noto_Sans_CJK_KR',sans-serif]">
            <MenuBar />
            <main className="flex min-h-0 flex-1 flex-col overflow-hidden rounded-xl bg-white">
                <h1 className="flex h-[29px] shrink-0 items-center justify-center bg-[#f5f7f8] font-[Inter,'Noto_Sans_CJK_KR',sans-serif] text-[14px] font-semibold text-[#3c3c3c]">
                    피크 보관 도구 v9* (Team hub - Kang Myeong Seok) - Autodesk Fusion
                </h1>
                <TabStrip />
                <Ribbon />
                <div className="relative min-h-0 flex-1 bg-white">
                    <Model />
                    <Browser />
                    <ViewCube />
                    <div className="absolute bottom-1 left-1">
                        <div className={clsx(panelHeader, "pl-[30px]")}>
                            <h2 className="flex-1">COMMENTS</h2>
                            <button aria-label="Add comment"><Plus size={12} strokeWidth={3} color="#777" /></button>
                        </div>
                    </div>
                    <NavBar />
                    <svg width="16" height="16" viewBox="0 0 16 16" className="absolute right-[13px] bottom-[6px]"><path d="M8 0a8 8 0 0 1 8 8v8H8A8 8 0 0 1 8 0z" fill="#000" /><path d="M3 9l6-4M4 11l9-6M8 11l5-3v3" stroke="#fff" strokeWidth="1.300" /></svg>
                </div>
                <Timeline />
            </main>
            {/* traffic lights */}
            <div className="absolute top-[44px] left-2 flex gap-2">
                <button aria-label="Close" className="size-[13px] rounded-full bg-[#fb5f57]" />
                <button aria-label="Minimize" className="size-[13px] rounded-full bg-[#fbbd3f]" />
                <button aria-label="Zoom window" className="size-[13px] rounded-full bg-[#6fc24a]" />
            </div>
            {/* pink highlight over the top left corner */}
            <div className="pointer-events-none absolute top-6 left-0 h-[247px] w-[271px] bg-gradient-to-b from-white to-[#ffe6fb] to-5% mix-blend-multiply" />
            <div className="pointer-events-none absolute top-6 left-0 h-[247px] w-[271px] bg-gradient-to-b from-black to-[#200006] to-5% mix-blend-plus-lighter" />
        </div>
    );
}
